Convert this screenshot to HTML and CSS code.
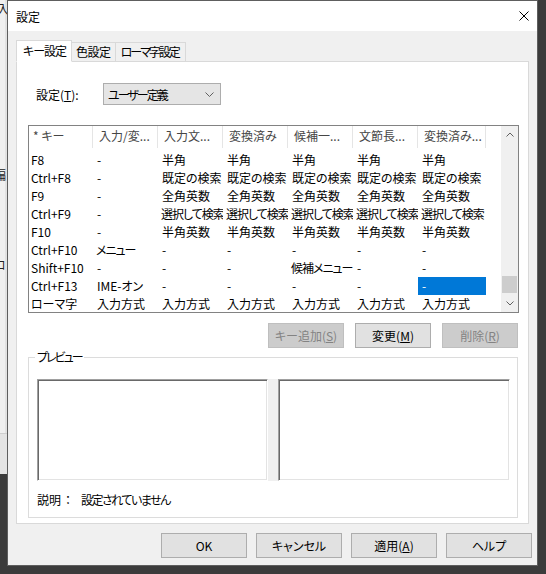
FILE: index.html
```html
<!DOCTYPE html>
<html lang="ja">
<head>
<meta charset="utf-8">
<title>設定</title>
<link rel="stylesheet" href="styles.css">
</head>
<body>
<div class="desk">
  <div class="bgwin">
    <div class="bgwin-main"></div>
    <div class="bgwin-status"></div>
    <span class="frag frag-a">入</span>
    <span class="frag frag-b">編</span>
    <span class="frag frag-c">ロ</span>
  </div>

  <div class="dialog">
    <div class="titlebar">
      <span class="title">設定</span>
      <svg class="close" width="10" height="10" viewBox="0 0 10 10"><path d="M0.5 0.5L9.5 9.5M9.5 0.5L0.5 9.5" stroke="#000" stroke-width="1" fill="none"/></svg>
    </div>

    <div class="body">
      <div class="tabs">
        <div class="tab active">キー設定</div>
        <div class="tab">色設定</div>
        <div class="tab kana">ローマ字設定</div>
      </div>

      <div class="panel">
        <div class="setrow">
          <span class="setlabel">設定(<u>T</u>):</span>
          <div class="combo">
            <span class="kana">ユーザー定義</span>
            <svg width="9" height="5" viewBox="0 0 9 5"><path d="M0.5 0.5L4.5 4.5L8.5 0.5" fill="none" stroke="#606060" stroke-width="1"/></svg>
          </div>
        </div>

        <div class="list">
          <div class="grid">
            <div class="row head">
              <div class="cell key">* キー</div>
              <div class="cell">入力/変...</div>
              <div class="cell">入力文...</div>
              <div class="cell">変換済み</div>
              <div class="cell">候補一...</div>
              <div class="cell">文節長...</div>
              <div class="cell">変換済み...</div>
            </div>
            <div class="row">
              <div class="cell key">F8</div><div class="cell">-</div><div class="cell">半角</div><div class="cell">半角</div><div class="cell">半角</div><div class="cell">半角</div><div class="cell">半角</div>
            </div>
            <div class="row">
              <div class="cell key">Ctrl+F8</div><div class="cell">-</div><div class="cell">既定の検索</div><div class="cell">既定の検索</div><div class="cell">既定の検索</div><div class="cell">既定の検索</div><div class="cell">既定の検索</div>
            </div>
            <div class="row">
              <div class="cell key">F9</div><div class="cell">-</div><div class="cell">全角英数</div><div class="cell">全角英数</div><div class="cell">全角英数</div><div class="cell">全角英数</div><div class="cell">全角英数</div>
            </div>
            <div class="row">
              <div class="cell key">Ctrl+F9</div><div class="cell">-</div><div class="cell tight">選択して検索</div><div class="cell tight">選択して検索</div><div class="cell tight">選択して検索</div><div class="cell tight">選択して検索</div><div class="cell tight">選択して検索</div>
            </div>
            <div class="row">
              <div class="cell key">F10</div><div class="cell">-</div><div class="cell">半角英数</div><div class="cell">半角英数</div><div class="cell">半角英数</div><div class="cell">半角英数</div><div class="cell">半角英数</div>
            </div>
            <div class="row">
              <div class="cell key">Ctrl+F10</div><div class="cell tight">メニュー</div><div class="cell">-</div><div class="cell">-</div><div class="cell">-</div><div class="cell">-</div><div class="cell">-</div>
            </div>
            <div class="row">
              <div class="cell key">Shift+F10</div><div class="cell">-</div><div class="cell">-</div><div class="cell">-</div><div class="cell tight">候補メニュー</div><div class="cell">-</div><div class="cell">-</div>
            </div>
            <div class="row">
              <div class="cell key">Ctrl+F13</div><div class="cell">IME-オン</div><div class="cell">-</div><div class="cell">-</div><div class="cell">-</div><div class="cell">-</div><div class="cell sel">-</div>
            </div>
            <div class="row">
              <div class="cell key">ローマ字</div><div class="cell">入力方式</div><div class="cell">入力方式</div><div class="cell">入力方式</div><div class="cell">入力方式</div><div class="cell">入力方式</div><div class="cell">入力方式</div>
            </div>
          </div>
          <div class="vscroll">
            <div class="sbtn"><svg width="8" height="5" viewBox="0 0 8 5"><path d="M0.5 4.5L4 1L7.5 4.5" fill="none" stroke="#606060" stroke-width="1"/></svg></div>
            <div class="strack"><div class="thumb"></div></div>
            <div class="sbtn"><svg width="8" height="5" viewBox="0 0 8 5"><path d="M0.5 0.5L4 4L7.5 0.5" fill="none" stroke="#606060" stroke-width="1"/></svg></div>
          </div>
        </div>

        <div class="actions">
          <div class="btn disabled">キー追加(<u>S</u>)</div>
          <div class="btn">変更(<u>M</u>)</div>
          <div class="btn disabled">削除(<u>R</u>)</div>
        </div>

        <div class="group">
          <span class="group-label">プレビュー</span>
          <div class="previews">
            <div class="pbox left"></div>
            <div class="pgap"></div>
            <div class="pbox right"></div>
          </div>
          <div class="desc"><span>説明</span><span class="colon">：</span><span class="kana">設定されていません</span></div>
        </div>
      </div>

      <div class="footer">
        <div class="btn fbtn">OK</div>
        <div class="btn fbtn">キャンセル</div>
        <div class="btn fbtn">適用(<u>A</u>)</div>
        <div class="btn fbtn">ヘルプ</div>
      </div>
    </div>
  </div>
</div>
</body>
</html>
```

FILE: styles.css
```css
* { box-sizing: border-box; }

body {
  margin: 0;
  background: #3b3b3b;
  font-family: "Noto Sans CJK JP", "Noto Sans", sans-serif;
  font-size: 12px;
  font-feature-settings: "palt";
  color: #000;
}

.desk {
  position: relative;
  width: 546px;
  height: 574px;
  overflow: hidden;
  background: #3b3b3b;
}

/* background window peeking out on the left */
.bgwin {
  position: absolute;
  left: 0;
  top: 0;
  width: 7px;
  height: 474px;
  overflow: hidden;
  display: flex;
  flex-direction: column;
  background: #f0f0f0;
}
.bgwin-main { flex: 1; background: #f0f0f0; border-right: 2px solid #e2e2e2; }
.bgwin-status { height: 41px; background: #e4e4e4; border-top: 1px solid #cfcfcf; }
.frag { position: absolute; font-size: 12px; line-height: 14px; color: #222; }
.frag-a { left: -3px; top: 2px; }
.frag-b { left: -6px; top: 168px; }
.frag-c { left: -6px; top: 258px; }

.kana { letter-spacing: -1.5px; }
.tight { letter-spacing: -1px; }

/* dialog window */
.dialog {
  position: absolute;
  left: 7px;
  top: 0;
  width: 531px;
  height: 566px;
  border: 1px solid #5e5e5e;
  background: #f0f0f0;
  display: flex;
  flex-direction: column;
}

.titlebar {
  height: 30px;
  background: #fff;
  display: flex;
  align-items: center;
  justify-content: space-between;
  padding: 0 8px;
  flex: none;
}
.title { line-height: 16px; margin-top: 1px; }
.close { display: block; margin-top: -1px; }

.body {
  flex: 1;
  padding: 9px 8px 0;
  display: flex;
  flex-direction: column;
}

/* tabs */
.tabs {
  display: flex;
  align-items: flex-end;
  height: 22px;
  margin-bottom: -1px;
  position: relative;
  z-index: 1;
}
.tab {
  height: 20px;
  line-height: 18px;
  padding: 0 4px;
  border: 1px solid #d9d9d9;
  border-left: none;
  background: #f0f0f0;
  white-space: nowrap;
  letter-spacing: -0.5px;
}
.tab.kana { letter-spacing: -2px; padding: 0 6px 0 5px; }
.tab.active {
  height: 22px;
  line-height: 19px;
  padding: 0 5px 0 6px;
  background: #fff;
  border-left: 1px solid #d9d9d9;
  border-bottom-color: #fff;
  letter-spacing: -1px;
}

.panel {
  height: 463px;
  border: 1px solid #d9d9d9;
  background: #fff;
  display: flex;
  flex-direction: column;
  padding-top: 21px;
}

/* setting row */
.setrow {
  display: flex;
  align-items: center;
  height: 22px;
  padding-left: 19px;
}
.setlabel { width: 67px; white-space: nowrap; }
.combo {
  width: 118px;
  height: 22px;
  border: 1px solid #adadad;
  background: #e5e5e5;
  display: flex;
  align-items: center;
  justify-content: space-between;
  padding: 0 6px 0 4px;
}
.combo .kana { letter-spacing: -2px; }
.combo svg { display: block; }

/* list view */
.list {
  margin: 20px 9px 0 11px;
  height: 188px;
  border: 1px solid #828282;
  display: flex;
  background: #fff;
}
.grid { flex: 1; overflow: hidden; }
.row {
  display: grid;
  grid-template-columns: 64px 65px 65px 65px 65px 65px 68px;
  height: 18px;
  line-height: 18px;
}
.cell {
  padding-left: 4px;
  white-space: nowrap;
  overflow: hidden;
}
.cell.key { padding-left: 2px; }
.cell.tight { padding-left: 3px; }
.row.head { height: 25px; }
.head .cell {
  height: 22px;
  line-height: 20px;
  padding-left: 6px;
  color: #464646;
  border-right: 1px solid #e5e5e5;
}
.head .cell.key { padding-left: 4px; }
.cell.sel { background: #0078d7; color: #fff; }

.vscroll {
  width: 17px;
  background: #f0f0f0;
  display: flex;
  flex-direction: column;
}
.sbtn {
  height: 17px;
  display: flex;
  align-items: center;
  justify-content: center;
  flex: none;
}
.sbtn svg { display: block; }
.strack {
  flex: 1;
  display: flex;
  flex-direction: column;
  justify-content: flex-end;
  padding: 0 1px 2px;
}
.thumb { height: 17px; background: #cdcdcd; }

/* buttons */
.actions {
  display: flex;
  justify-content: flex-end;
  gap: 11px;
  margin: 10px 10px 0 0;
}
.btn {
  width: 76px;
  height: 25px;
  border: 1px solid #adadad;
  background: #e1e1e1;
  display: flex;
  align-items: center;
  justify-content: center;
  white-space: nowrap;
}
.btn.disabled {
  background: #cccccc;
  border-color: #bfbfbf;
  color: #838383;
}

/* preview group */
.group {
  position: relative;
  margin: 9px 10px 0 11px;
  border: 1px solid #dcdcdc;
  padding: 21px 7px 8px 8px;
}
.group-label {
  position: absolute;
  top: -9px;
  left: 6px;
  padding: 0 2px;
  background: #fff;
  line-height: 16px;
  letter-spacing: -2px;
}
.previews { display: flex; height: 102px; }
.pbox {
  border: 1px solid;
  border-color: #a0a0a0 #fff #fff #a0a0a0;
  box-shadow: inset 1px 1px #696969, inset -1px -1px #e3e3e3;
  background: #fff;
}
.pbox.left { width: 231px; }
.pbox.right { width: 232px; }
.pgap { width: 10px; background: #f0f0f0; }
.desc {
  margin-top: 10px;
  line-height: 18px;
  white-space: nowrap;
}
.colon {
  font-feature-settings: normal;
  margin: 0 7px 0 1px;
}

/* footer */
.footer {
  display: flex;
  justify-content: flex-end;
  gap: 9px;
  margin: 9px -3px 0 0;
}
.fbtn { width: 86px; }
```
